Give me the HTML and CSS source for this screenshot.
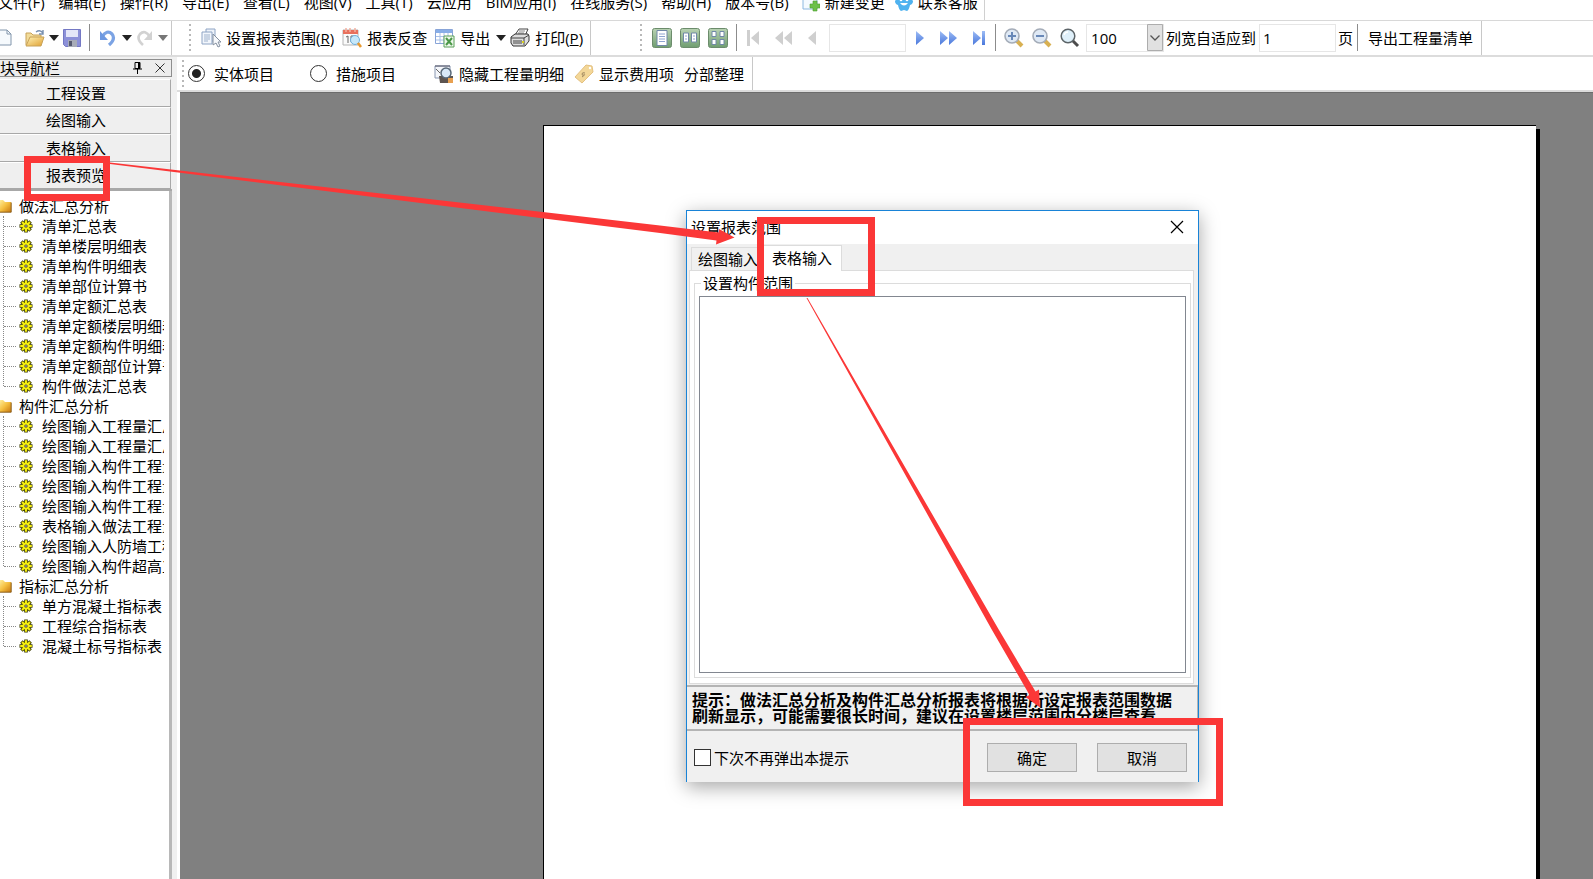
FILE: index.html
```html
<!DOCTYPE html>
<html lang="zh-CN">
<head>
<meta charset="utf-8">
<title>报表预览</title>
<link rel="stylesheet" href="styles.css">
</head>
<body>
<svg class="defs" aria-hidden="true">
  <defs>
    <linearGradient id="gold" x1="0" y1="0" x2="1" y2="1"><stop offset="0" stop-color="#fff3b8"/><stop offset="1" stop-color="#e0a030"/></linearGradient>
    <linearGradient id="green" x1="0" y1="0" x2="0" y2="1"><stop offset="0" stop-color="#b9d3b4"/><stop offset="1" stop-color="#6f9d70"/></linearGradient>
    <linearGradient id="blue" x1="0" y1="0" x2="0" y2="1"><stop offset="0" stop-color="#9dbcf5"/><stop offset="1" stop-color="#4a78dc"/></linearGradient>
    <linearGradient id="folder" x1="0" y1="0" x2="1" y2="1"><stop offset="0" stop-color="#fff0a0"/><stop offset="0.5" stop-color="#f5c040"/><stop offset="1" stop-color="#c87810"/></linearGradient>
    <symbol id="gear" viewBox="0 0 14 14">
      <g stroke="#3c3c00" stroke-width="3.6"><path d="M7 .5v13M.5 7h13M2.4 2.4l9.2 9.2M11.6 2.4l-9.2 9.2"/></g>
      <g stroke="#f5ee10" stroke-width="2"><path d="M7 1.2v11.600M1.200 7h11.600M3 3l8 8M11 3l-8 8"/></g>
      <circle cx="7" cy="7" r="3.6" fill="#f5ee10"/><circle cx="7" cy="7" r="1.6" fill="#333"/><circle cx="7" cy="7" r=".7" fill="#fff"/>
    </symbol>
    <symbol id="dir" viewBox="0 0 13 14"><path d="M0 1h4l2 2h6v10H0z" fill="url(#folder)"/><path d="M0 13.2h12.2V3.5" fill="none" stroke="#8a5a10" stroke-width="1"/></symbol>
    <symbol id="down" viewBox="0 0 10 6"><path d="M0 0h10L5 6z" fill="currentColor"/></symbol>
  </defs>
</svg>

<nav class="menubar" aria-label="主菜单">
  <a href="#">文件(F)</a><a href="#">编辑(E)</a><a href="#">操作(R)</a><a href="#">导出(E)</a><a href="#">查看(L)</a><a href="#">视图(V)</a><a href="#">工具(T)</a><a href="#">云应用</a><a href="#">BIM应用(I)</a><a href="#">在线服务(S)</a><a href="#">帮助(H)</a><a href="#">版本号(B)</a>
  <a href="#" class="with-icon"><svg width="18" height="18" viewBox="0 0 18 18"><path d="M1 0h14v15H1z" fill="#f4faff" stroke="#8cb8e0"/><path d="M11 7h4v3h3v4h-3v3h-4v-3H8v-4h3z" fill="#6cc04a" stroke="#4ea030" stroke-width=".6"/></svg>新建变更</a>
  <a href="#" class="with-icon last"><svg width="18" height="18" viewBox="0 0 18 18"><path d="M0 7q1-2 3-1V1h12v5q2-1 3 1 0 3-3 4-1 5-3 6l-3-1-3 1q-2-1-3-6Q0 10 0 7z" fill="#4fb2ef"/><path d="M5 9q4 5 8 0z" fill="#fff"/><circle cx="6" cy="6" r="1.3" fill="#fff"/><circle cx="12" cy="6" r="1.3" fill="#fff"/></svg>联系客服</a>
</nav>

<div class="toolbar" role="toolbar" aria-label="工具栏">
  <div class="group files">
    <button aria-label="新建"><svg width="12" height="18" viewBox="0 0 12 18"><path d="M-6 1H7l4 4v11H-6z" fill="#f6fafd" stroke="#8296ac"/><path d="M7 1v4h4" fill="none" stroke="#8296ac"/></svg></button>
    <button class="m13" aria-label="打开"><svg width="20" height="18" viewBox="0 0 20 18"><path d="M1 16V4h5l2 2h8v4" fill="#f2dc9a" stroke="#c8a258"/><path d="M1 17l4-9h14l-3 9z" fill="url(#gold)" stroke="#c8a258"/><path d="M11 3q4-3 7 1m0-3v4h-4" fill="none" stroke="#7890b0" stroke-width="1.4"/></svg></button>
    <button class="m4 dark" aria-label="打开列表"><svg width="10" height="6"><use href="#down"/></svg></button>
    <button class="m4" aria-label="保存"><svg width="18" height="18" viewBox="0 0 18 18"><path d="M.5.5h17v17h-15l-2-2z" fill="#8c90d8" stroke="#7478c4"/><path d="M3 1h12v7H3z" fill="#e4e6f8"/><path d="M5 11h9v7H5z" fill="#a8acb8"/><path d="M6 12h3v5H6z" fill="#565a70"/></svg></button>
    <span class="sep m8"></span>
    <button class="m10" aria-label="撤销"><svg width="16" height="18" viewBox="0 0 16 18"><path d="M2 8q5-8 10-3 4 5-3 11" fill="none" stroke="#7ba3e4" stroke-width="3.2"/><path d="M0 2v9h8z" fill="#6d98e0"/></svg></button>
    <button class="m6 dark" aria-label="撤销列表"><svg width="10" height="6"><use href="#down"/></svg></button>
    <button class="m4" aria-label="重做"><svg width="16" height="18" viewBox="0 0 16 18"><path d="M14 8Q9 0 4 5q-4 5 3 11" fill="none" stroke="#d2d2d2" stroke-width="2.6"/><path d="M16 2v9H8z" fill="#d2d2d2"/></svg></button>
    <button class="m6 gray" aria-label="重做列表"><svg width="10" height="6"><use href="#down"/></svg></button>
  </div>
  <div class="group reports">
    <span class="grip"></span>
    <button class="m10"><svg width="20" height="20" viewBox="0 0 20 20"><path d="M5 1h9v12H5z" fill="#eef3fa" stroke="#8ea4c4"/><path d="M1 4h10v12H1z" fill="#f2f6fc" stroke="#8ea4c4"/><path d="M3 7h6M3 9h6M3 11h6M3 13h4" stroke="#9fb2cc"/><path d="M12 6v11l3-2 2 4 2-1-2-4h3z" fill="#f6f8fb" stroke="#8490a0"/></svg><span>设置报表范围(<u>R</u>)</span></button>
    <button class="m8"><svg width="20" height="20" viewBox="0 0 20 20"><path d="M1 2h15v15H1z" fill="#fafafa" stroke="#b4b4b4"/><path d="M1 2h15v4H1z" fill="#e8705c"/><path d="M4 0v4M8 0v4M13 0v4" stroke="#f3b0a0" stroke-width="1.5"/><path d="M4 9l2-1v7M9 8h3v6H9z" fill="none" stroke="#666"/><circle cx="13" cy="12" r="4.5" fill="#c6e8fa" stroke="#70b0dc"/><path d="M16 15l3 4" stroke="#e89a30" stroke-width="2.6"/></svg><span>报表反查</span></button>
    <button class="m8"><svg width="20" height="20" viewBox="0 0 20 20"><path d="M.5 1.500h17v14H.5z" fill="#fff" stroke="#88a4d8"/><path d="M1 2h16v3H1z" fill="#88aee8"/><path d="M1 8.500h16M1 12h16M5 5v10M9 5v10M13 5v10" stroke="#a8c0e8"/><path d="M9 8h10v11H9z" fill="#eef8ec" stroke="#5ba058"/><path d="M11 10l6 7M17 10l-6 7" stroke="#4b9848" stroke-width="2"/></svg><span>导出</span></button>
    <button class="m6 dark" aria-label="导出列表"><svg width="10" height="6"><use href="#down"/></svg></button>
    <button class="m4"><svg width="20" height="20" viewBox="0 0 20 20"><path d="M5 7l4-6h9l-3 7" fill="#fff" stroke="#444"/><path d="M9 3h6M8 5h6" stroke="#888"/><path d="M1 9l4-3h13l1 2v5l-4 5H3l-2-3z" fill="#ddd" stroke="#333"/><path d="M1 10h13l5-3M14 10v7M3 13h9M3 15h9" fill="none" stroke="#444"/><path d="M12 14h2" stroke="#d8d020" stroke-width="2"/></svg><span>打印(<u>P</u>)</span></button>
  </div>
  <div class="group pages">
    <span class="grip"></span>
    <button class="m10" aria-label="单页"><svg width="20" height="20" viewBox="0 0 20 20"><rect x=".5" y=".5" width="19" height="19" rx="2" fill="url(#green)" stroke="#6c8c6c"/><path d="M5 2.500h10v15H5z" fill="#fff" stroke="#7088a8"/><path d="M7 6h6M7 8.500h6M7 11h6M7 13.500h6" stroke="#8ea4d0"/></svg></button>
    <button class="m8" aria-label="双页"><svg width="20" height="20" viewBox="0 0 20 20"><rect x=".5" y=".5" width="19" height="19" rx="2" fill="url(#green)" stroke="#6c8c6c"/><path d="M3.500 5h5v9h-5zM11.500 5h5v9h-5z" fill="#fff" stroke="#7088a8"/><path d="M5 8h2M5 11h2M13 8h2M13 11h2" stroke="#8ea4d0"/></svg></button>
    <button class="m8" aria-label="多页"><svg width="20" height="20" viewBox="0 0 20 20"><rect x=".5" y=".5" width="19" height="19" rx="2" fill="url(#green)" stroke="#6c8c6c"/><path d="M4 3.500h4v5H4zM12 3.500h4v5h-4zM4 11.500h4v5H4zM12 11.500h4v5h-4z" fill="#fff" stroke="#7088a8"/></svg></button>
    <span class="sep m8"></span>
    <button class="m10" aria-label="首页"><svg width="12" height="16" viewBox="0 0 12 16"><path d="M0 0h3v16H0zM12 1v14L4 8z" fill="#cfcfcf"/></svg></button>
    <button class="m16" aria-label="快退"><svg width="17" height="16" viewBox="0 0 17 16"><path d="M8 1v14L0 8zM17 1v14L9 8z" fill="#cfcfcf"/></svg></button>
    <button class="m16" aria-label="上一页"><svg width="8" height="16" viewBox="0 0 8 16"><path d="M8 1v14L0 8z" fill="#cfcfcf"/></svg></button>
    <input class="m13 pageno" type="text" aria-label="页码">
    <button class="m10" aria-label="下一页"><svg width="8" height="16" viewBox="0 0 8 16"><path d="M0 1v14l8-7z" fill="url(#blue)"/></svg></button>
    <button class="m16" aria-label="快进"><svg width="17" height="16" viewBox="0 0 17 16"><path d="M0 1v14l8-7zM9 1v14l8-7z" fill="url(#blue)"/></svg></button>
    <button class="m16" aria-label="末页"><svg width="12" height="16" viewBox="0 0 12 16"><path d="M0 1v14l8-7zM9 1h3v14H9z" fill="url(#blue)"/></svg></button>
    <span class="sep m10"></span>
    <button class="m8" aria-label="放大"><svg width="20" height="20" viewBox="0 0 20 20"><path d="M13 13l5 5" stroke="#d8b052" stroke-width="4"/><circle cx="8" cy="8" r="7" fill="#dfe9f5" stroke="#a4acb8" stroke-width="1.600"/><path d="M4 8h8M8 4v8" stroke="#6888b8" stroke-width="2"/></svg></button>
    <button class="m8" aria-label="缩小"><svg width="20" height="20" viewBox="0 0 20 20"><path d="M13 13l5 5" stroke="#d8b052" stroke-width="4"/><circle cx="8" cy="8" r="7" fill="#dfe9f5" stroke="#a4acb8" stroke-width="1.600"/><path d="M4 8h8" stroke="#6888b8" stroke-width="2"/></svg></button>
    <button class="m8" aria-label="缩放"><svg width="20" height="20" viewBox="0 0 20 20"><path d="M12 12l6 6" stroke="#4c4c4c" stroke-width="3"/><circle cx="8" cy="8" r="6.800" fill="#dff0fa" stroke="#5c6468" stroke-width="1.500"/><path d="M4 7q1-3 4-3" fill="none" stroke="#fff" stroke-width="1.500"/></svg></button>
    <span class="combo m6">
      <select aria-label="缩放比例"><option>100</option></select>
      <svg width="16" height="27" viewBox="0 0 16 27"><path d="M.5.5h15v26H.5z" fill="#e1e1e1" stroke="#adadad"/><path d="M3.500 11.500L8 16l4.500-4.500" fill="none" stroke="#555" stroke-width="1.300"/></svg>
    </span>
    <label class="fit m2">列宽自适应到<input type="text" value="1"></label>
    <span class="m2">页</span>
    <span class="sep m4"></span>
    <button class="m10">导出工程量清单</button>
  </div>
</div>

<div class="workspace">
  <aside class="sidebar">
    <header class="side-title"><span>块导航栏</span>
      <button aria-label="固定"><svg width="9" height="12" viewBox="0 0 9 12"><path d="M2 .5h5v6H2zM0 7h9M4.500 7v5" fill="none" stroke="#000"/><path d="M6 0v7" stroke="#000" stroke-width="2"/></svg></button>
      <button class="m13" aria-label="关闭"><svg width="10" height="10" viewBox="0 0 10 10"><path d="M.5.5l9 9M9.500.5l-9 9" stroke="#333"/></svg></button>
    </header>
    <div class="side-nav"><button>工程设置</button><button>绘图输入</button><button>表格输入</button><button>报表预览</button></div>
    <ul class="tree">
      <li><div class="folder"><svg width="13" height="14"><use href="#dir"/></svg>做法汇总分析</div>
        <ul>
          <li><svg width="14" height="14"><use href="#gear"/></svg><span>清单汇总表</span></li>
          <li><svg width="14" height="14"><use href="#gear"/></svg><span>清单楼层明细表</span></li>
          <li><svg width="14" height="14"><use href="#gear"/></svg><span>清单构件明细表</span></li>
          <li><svg width="14" height="14"><use href="#gear"/></svg><span>清单部位计算书</span></li>
          <li><svg width="14" height="14"><use href="#gear"/></svg><span>清单定额汇总表</span></li>
          <li><svg width="14" height="14"><use href="#gear"/></svg><span>清单定额楼层明细表</span></li>
          <li><svg width="14" height="14"><use href="#gear"/></svg><span>清单定额构件明细表</span></li>
          <li><svg width="14" height="14"><use href="#gear"/></svg><span>清单定额部位计算书</span></li>
          <li><svg width="14" height="14"><use href="#gear"/></svg><span>构件做法汇总表</span></li>
        </ul></li>
      <li><div class="folder"><svg width="13" height="14"><use href="#dir"/></svg>构件汇总分析</div>
        <ul>
          <li><svg width="14" height="14"><use href="#gear"/></svg><span>绘图输入工程量汇总表</span></li>
          <li><svg width="14" height="14"><use href="#gear"/></svg><span>绘图输入工程量汇总表</span></li>
          <li><svg width="14" height="14"><use href="#gear"/></svg><span>绘图输入构件工程量</span></li>
          <li><svg width="14" height="14"><use href="#gear"/></svg><span>绘图输入构件工程量</span></li>
          <li><svg width="14" height="14"><use href="#gear"/></svg><span>绘图输入构件工程量</span></li>
          <li><svg width="14" height="14"><use href="#gear"/></svg><span>表格输入做法工程量</span></li>
          <li><svg width="14" height="14"><use href="#gear"/></svg><span>绘图输入人防墙工程量</span></li>
          <li><svg width="14" height="14"><use href="#gear"/></svg><span>绘图输入构件超高工程量</span></li>
        </ul></li>
      <li><div class="folder"><svg width="13" height="14"><use href="#dir"/></svg>指标汇总分析</div>
        <ul>
          <li><svg width="14" height="14"><use href="#gear"/></svg><span>单方混凝土指标表</span></li>
          <li><svg width="14" height="14"><use href="#gear"/></svg><span>工程综合指标表</span></li>
          <li><svg width="14" height="14"><use href="#gear"/></svg><span>混凝土标号指标表</span></li>
        </ul></li>
    </ul>
  </aside>

  <main class="content">
    <div class="optionbar">
      <div class="group options">
        <span class="grip"></span>
        <label class="m4"><input type="radio" name="kind" checked>实体项目</label>
        <label class="m36"><input type="radio" name="kind">措施项目</label>
        <button class="m38"><svg width="20" height="20" viewBox="0 0 20 20"><path d="M1 2h15v12H1z" fill="#f4f6fa" stroke="#8896b0"/><path d="M1 2h15" stroke="#556"/><path d="M5 12h14v7H6z" fill="#5c5450"/><circle cx="12" cy="9" r="5" fill="#d8e8f8" stroke="#586878" stroke-width="1.500"/><path d="M14 14h5v5h-5z" fill="#e8a050"/><path d="M2 5l4 4" stroke="#666"/></svg><span>隐藏工程量明细</span></button>
        <button class="m10"><svg width="20" height="20" viewBox="0 0 20 20"><path d="M1 13L12 1l6 1 1 6L8 19z" fill="#f3d798" stroke="#e4c080"/><circle cx="16" cy="4" r="1.200" fill="#fff"/><path d="M11 9q-3-1-3 1t2 1-2 2" fill="none" stroke="#a08860"/></svg><span>显示费用项</span></button>
        <button class="m10">分部整理</button>
      </div>
    </div>
    <div class="canvas"><div class="paper"></div></div>
  </main>
</div>

<section class="dialog" role="dialog" aria-labelledby="dlg-title">
  <header><h1 id="dlg-title">设置报表范围</h1><button aria-label="关闭对话框"><svg width="14" height="14" viewBox="0 0 14 14"><path d="M1 1l12 12M13 1L1 13" stroke="#000" stroke-width="1.200"/></svg></button></header>
  <div class="tabs" role="tablist"><button role="tab" aria-selected="false">绘图输入</button><button role="tab" aria-selected="true" class="active">表格输入</button></div>
  <div class="tabpanel" role="tabpanel">
    <fieldset><legend>设置构件范围</legend><div class="listbox"></div></fieldset>
  </div>
  <p class="hint">提示：做法汇总分析及构件汇总分析报表将根据所设定报表范围数据<br>刷新显示，可能需要很长时间，建议在设置楼层范围内分楼层查看。</p>
  <footer><label><input type="checkbox">下次不再弹出本提示</label><button>确定</button><button>取消</button></footer>
</section>

<svg class="marks" width="1300" height="879" viewBox="0 0 1300 879" aria-hidden="true">
  <g fill="none" stroke="#fb3737" stroke-width="7">
    <rect x="27.500" y="159.500" width="79" height="38"/>
    <rect x="760.500" y="220.500" width="111" height="72"/>
    <rect x="966.500" y="721.500" width="253" height="81"/>
  </g>
  <g fill="#fb3737">
    <path d="M110 162.500L660 225.500l58.500 7 .5-3.500 15.500 8.500-18.500 7 .5-4-56.500-7.500L110 164z"/>
    <path d="M807.500 298L999 630l36.500 61.500 3.500-2 1 18-14.500-10.500 4-2L992 630 806.500 298z"/>
  </g>
</svg>
</body>
</html>
```

FILE: styles.css
```css
* { box-sizing: border-box; }
body {
  margin: 0;
  height: 100vh;
  overflow: hidden;
  display: flex;
  flex-direction: column;
  position: relative;
  background: #fff;
  color: #000;
  font: 15px/20px "Open Sans", "Noto Sans CJK SC", sans-serif;
  white-space: nowrap;
}
.defs { position: absolute; width: 0; height: 0; }
button, input, select { font: inherit; color: inherit; }
button { border: 0; padding: 0; background: none; display: flex; align-items: center; white-space: nowrap; }
svg { flex: none; display: block; }
ul { list-style: none; margin: 0; padding: 0; }

.menubar {
  flex: none;
  align-self: flex-start;
  height: 20px;
  display: flex;
  align-items: flex-start;
  gap: 14px;
  overflow: hidden;
  padding-right: 6px;
  border-right: 1px solid #d0d0d0;
}
.menubar a { color: inherit; text-decoration: none; margin-top: -8px; }
.menubar a:first-child { margin-left: -2px; }
.menubar .with-icon { display: flex; gap: 5px; margin-left: -1px; }
.menubar .last { margin-left: -4px; }
.menubar .with-icon svg { margin-top: 2px; }

.toolbar { flex: none; height: 37px; display: flex; border-top: 1px solid #d8d8d8; border-bottom: 2px solid #dcdcdc; }
.toolbar .group { padding-bottom: 1px; }
.group { display: flex; align-items: center; border-right: 1px solid #c8c8c8; }
.group button { gap: 5px; }
.files { width: 172px; }
.reports { padding: 0 7px 0 17px; }
.pages { padding: 0 8px 0 49px; }
.m2 { margin-left: 2px; }
.m4 { margin-left: 4px; }
.m6 { margin-left: 6px; }
.m8 { margin-left: 8px; }
.m10 { margin-left: 10px; }
.m13 { margin-left: 13px; }
.m16 { margin-left: 16px; }
.m36 { margin-left: 36px; }
.m38 { margin-left: 38px; }
.dark { color: #222; }
.gray { color: #777; }
.sep { width: 1px; height: 27px; background: #8c8c8c; }
.grip { width: 2px; height: 28px; background: repeating-linear-gradient(#b8b8b8 0 2px, transparent 2px 5px); }
.pageno { width: 77px; height: 28px; border: 1px solid #e6e6e6; }
.combo { display: flex; width: 78px; height: 28px; border: 1px solid #e6e6e6; align-items: center; }
.combo select { flex: 1; min-width: 0; height: 26px; border: 0; padding: 0 0 0 4px; background: #fff; appearance: none; }
.fit { display: flex; align-items: center; gap: 3px; }
.fit input { width: 77px; height: 28px; border: 1px solid #e6e6e6; padding: 0 3px; }

.workspace { flex: 1; min-height: 0; display: flex; background: #f0f0f0; }
.sidebar { flex: none; width: 172px; display: flex; flex-direction: column; }
.side-title {
  display: flex;
  align-items: center;
  height: 18px;
  margin: 2px 0;
  padding-right: 6px;
  border: 1px solid #8e8e8e;
  border-left: 0;
  background: #ededed;
}
.side-title span { flex: 1; }
.side-nav { height: 112px; padding-right: 1px; display: grid; grid-template-rows: repeat(4, 1fr); border-bottom: 2px solid #a8a8a8; }
.side-nav button { justify-content: center; padding-right: 18px; background: #efefef; border-top: 1px solid #fff; border-bottom: 1px solid #a8a8a8; border-right: 1px solid #a8a8a8; }
.tree { flex: 1; min-height: 0; padding-top: 5px; background: #fff; border-right: 3px solid #b8b8b8; overflow: hidden; }
.folder { display: flex; align-items: center; gap: 7px; height: 20px; margin-left: -1px; }
.tree ul { position: relative; margin-left: 3px; }
.tree ul::before { content: ""; position: absolute; left: 0; top: 0; bottom: 10px; border-left: 1px dotted #888; }
.tree ul li { display: flex; align-items: center; height: 20px; width: 161px; }
.tree ul li::before { content: ""; width: 12px; margin: 0 3px 0 1px; border-top: 1px dotted #888; }
.tree ul li span { flex: 1; margin-left: 9px; overflow: hidden; }

.content { flex: 1; min-width: 0; display: flex; flex-direction: column; margin-left: 5px; background: #fff; }
.optionbar { flex: none; height: 35px; display: flex; border-bottom: 2px solid #dcdcdc; }
.options { padding: 0 8px 0 5px; }
.options label { display: flex; align-items: center; gap: 9px; }
.options input { appearance: none; width: 17px; height: 17px; margin: 0; border: 1px solid #333; border-radius: 50%; background: #fff; }
.options input:checked { background: radial-gradient(circle, #222 0 4px, #fff 5px); }
.canvas { flex: 1; min-height: 0; margin-left: 3px; padding: 32px 57px 0 363px; background: #808080; display: flex; border-top: 1px solid #6c6c6c; }
.paper { flex: 1; background: #fff; border: solid #000; border-width: 1px 0 0 1px; box-shadow: 4px 4px #000; }

.dialog {
  position: absolute;
  left: 686px;
  top: 210px;
  width: 513px;
  border: solid #1883d7;
  border-width: 1px 1px 0;
  background: #f0f0f0;
  box-shadow: 0 5px 18px rgba(0, 0, 0, 0.35);
}
.dialog header { display: flex; align-items: center; justify-content: space-between; height: 33px; padding: 0 14px 2px 4px; background: #fff; }
.dialog h1 { margin: 0; font: inherit; }
.tabs { display: flex; align-items: flex-end; height: 26px; padding-left: 4px; }
.tabs button { height: 23px; padding: 0 6px; border: 1px solid #dcdcdc; border-bottom: 0; background: #f0f0f0; }
.tabs .active { height: 26px; margin: 0 0 -1px -3px; padding: 0 9px 2px; background: #fff; position: relative; }
.tabpanel { margin: 0 4px 1px 2px; padding: 2px 2px 5px 4px; background: #fff; border: 1px solid #dcdcdc; }
fieldset { margin: 0; padding: 3px 4px 4px; border: 1px solid #dcdcdc; min-width: 0; }
legend { margin-left: 2px; padding: 0 2px; }
.listbox { height: 377px; border: 1px solid #828790; background: #fff; }
.hint { margin: 0; height: 46px; padding: 5px 5px 0; border: solid #b4b4b4; border-width: 2px 1px 2px 0; font-size: 16px; line-height: 16px; font-weight: 700; }
.dialog footer { display: flex; align-items: center; gap: 20px; height: 51px; padding: 2px 11px 0 7px; }
.dialog footer label { flex: 1; display: flex; align-items: center; gap: 3px; }
.dialog footer input { appearance: none; width: 17px; height: 17px; margin: 0; border: 1px solid #333; background: #fff; }
.dialog footer button { width: 90px; height: 29px; justify-content: center; border: 1px solid #adadad; background: #e1e1e1; }

.marks { position: absolute; left: 0; top: 0; pointer-events: none; }
```
